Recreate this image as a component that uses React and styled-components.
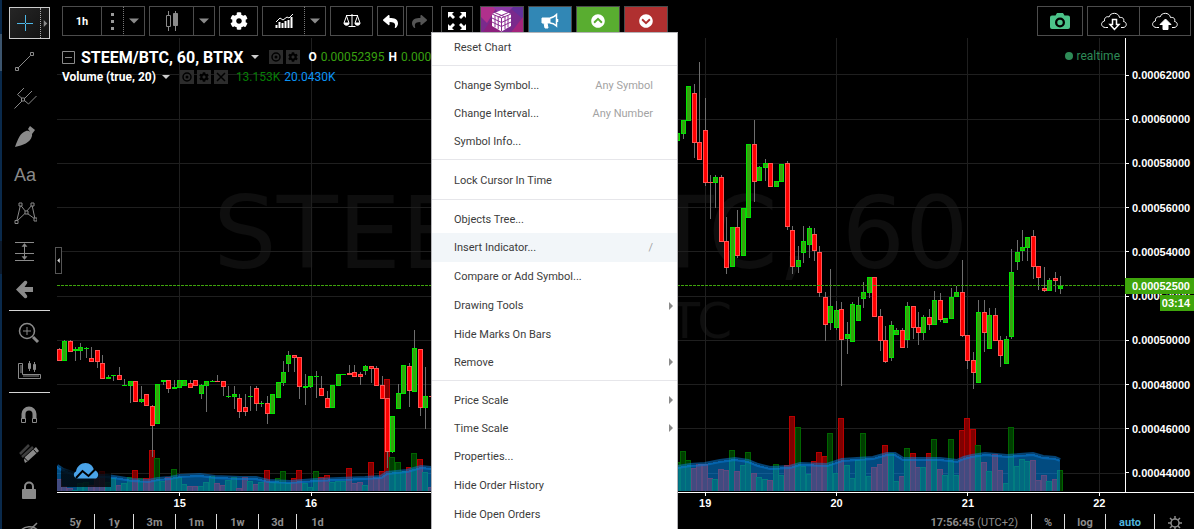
import React from "react";
import styled, { createGlobalStyle, css } from "styled-components";
import { FaCog, FaChevronCircleUp, FaChevronCircleDown, FaReply, FaShare } from "react-icons/fa";

const Global = createGlobalStyle`
  * { box-sizing: border-box; }
  body { margin: 0; background: #000; font-family: Roboto, "Open Sans", sans-serif; }
  button { font: inherit; color: inherit; background: none; border: 0; padding: 0; cursor: pointer; }
`;

/* ---------- market data: high, top, bottom, low, volume top, direction ---------- */
const WEEK_START = [
  [348, 349, 361, 361, 479, "r"], [340, 341, 361, 361, 486, "r", "g"], [340, 341, 352, 352, 488, "r"],
  [347, 349, 351, 361, 490, "g"], [343, 347, 351, 360, 483, "g"], [347, 348, 349, 358, 482, "g"],
  [347, 358, 362, 362, 485, "r"], [350, 350, 362, 368, 478, "r"], [355, 363, 379, 379, 471, "r"],
  [375, 377, 379, 379, 482, "g"], [375, 375, 376, 381, 478, "g"], [367, 375, 380, 380, 485, "r"],
  [379, 385, 386, 386, 483, "g"], [381, 381, 386, 403, 477, "g"], [381, 381, 402, 402, 470, "r"],
  [386, 399, 402, 403, 478, "g"], [394, 394, 406, 406, 478, "r"], [405, 406, 426, 457, 450, "r"],
  [384, 384, 424, 424, 458, "g"], [380, 380, 382, 385, 481, "g"], [380, 380, 389, 393, 477, "r"],
  [380, 387, 389, 389, 469, "g"], [380, 380, 388, 388, 477, "g"], [380, 380, 386, 386, 484, "g"],
  [380, 383, 388, 388, 486, "r"], [380, 380, 386, 386, 486, "r"], [384, 385, 394, 399, 486, "g"],
  [381, 381, 386, 412, 482, "g"], [380, 381, 382, 382, 476, "g"], [375, 381, 382, 382, 483, "r"],
  [381, 381, 387, 396, 485, "r"], [386, 396, 397, 398, 480, "g"], [386, 394, 397, 409, 477, "g"],
  [394, 398, 412, 418, 488, "r"], [394, 407, 412, 416, 477, "r"], [386, 396, 397, 411, 481, "g"],
  [386, 388, 404, 411, 484, "r"], [401, 403, 404, 407, 482, "g"], [396, 403, 414, 424, 470, "r"],
  [394, 394, 414, 414, 482, "g"], [382, 382, 398, 398, 478, "g"], [361, 372, 383, 386, 471, "g"],
  [351, 355, 364, 372, 483, "g"], [355, 355, 358, 372, 478, "r"], [357, 357, 387, 399, 470, "r"],
  [374, 386, 388, 405, 483, "g"], [376, 376, 387, 388, 487, "g"], [371, 376, 377, 398, 471, "g"],
  [376, 388, 396, 396, 477, "r"], [391, 398, 408, 408, 475, "r"], [385, 385, 408, 408, 482, "g"],
  [374, 374, 386, 386, 481, "g"], [374, 374, 375, 375, 481, "g"], [365, 373, 375, 375, 468, "r"],
  [365, 372, 377, 377, 483, "r"], [372, 374, 377, 385, 482, "r"], [365, 366, 371, 375, 485, "g"],
  [366, 366, 369, 383, 462, "r"], [366, 368, 386, 386, 478, "r"], [376, 385, 399, 399, 471, "r"],
  [398, 398, 452, 468, 379, "r"], [416, 416, 452, 453, 457, "g"], [384, 393, 409, 409, 462, "g"],
  [365, 365, 394, 394, 471, "g"], [363, 366, 391, 407, 467, "r"], [330, 348, 392, 392, 453, "g"],
  [349, 349, 408, 416, 459, "r"], [367, 396, 408, 429, 472, "g"], [396, 396, 397, 397, 487, "r"],
];
const WEEK_END = [
  [133, 133, 141, 141, 462, "g"], [120, 120, 134, 139, 451, "g"], [86, 86, 121, 121, 460, "g"],
  [84, 93, 143, 158, 468, "r"], [62, 142, 160, 160, 464, "r"], [98, 130, 183, 186, 464, "r"],
  [175, 182, 183, 219, 478, "r"], [175, 177, 183, 208, 479, "g"], [175, 177, 242, 242, 469, "r"],
  [217, 241, 268, 274, 470, "r"], [227, 227, 267, 267, 450, "g"], [210, 227, 256, 258, 471, "r"],
  [208, 208, 256, 256, 465, "g"], [144, 144, 218, 218, 452, "g"], [120, 144, 182, 202, 473, "r"],
  [166, 167, 181, 181, 477, "g"], [159, 163, 168, 181, 479, "g"], [163, 163, 187, 187, 480, "r"],
  [181, 181, 187, 187, 464, "g"], [164, 164, 182, 182, 475, "g"], [161, 163, 227, 230, 465, "r"],
  [226, 230, 267, 274, 416, "r"], [246, 260, 267, 273, 427, "g"], [226, 241, 253, 263, 466, "g"],
  [226, 228, 245, 258, 474, "g"], [228, 234, 251, 261, 461, "r"], [246, 252, 293, 297, 452, "r"],
  [292, 297, 325, 341, 456, "r"], [269, 306, 323, 330, 433, "g"], [301, 310, 328, 330, 473, "g"],
  [302, 309, 340, 386, 418, "r"], [322, 334, 339, 354, 465, "g"], [302, 304, 342, 342, 478, "g"],
  [297, 305, 321, 321, 460, "g"], [282, 292, 299, 308, 433, "g"], [277, 277, 293, 298, 476, "g"],
  [277, 277, 317, 317, 467, "r"], [309, 316, 341, 351, 464, "r"], [326, 340, 362, 363, 445, "r"],
  [321, 325, 358, 361, 453, "g"], [328, 330, 335, 335, 481, "g"], [328, 330, 348, 348, 476, "r"],
  [302, 306, 340, 348, 448, "g"], [306, 306, 328, 339, 453, "r"], [312, 327, 333, 345, 467, "r"],
  [315, 317, 333, 340, 467, "g"], [309, 317, 325, 330, 453, "r"], [291, 300, 325, 325, 439, "g"],
  [293, 300, 320, 322, 469, "r"], [318, 318, 323, 323, 475, "g"], [288, 297, 319, 319, 439, "g"],
  [286, 292, 297, 297, 475, "g"], [260, 292, 336, 337, 430, "r"], [335, 335, 361, 369, 418, "r"],
  [352, 360, 373, 389, 429, "r"], [300, 312, 383, 383, 445, "g"], [300, 312, 333, 352, 462, "r"],
  [308, 315, 349, 349, 471, "g"], [308, 315, 341, 341, 454, "r"], [336, 340, 356, 367, 470, "r"],
  [336, 339, 364, 364, 483, "g"], [249, 272, 337, 339, 427, "g"], [240, 252, 262, 270, 466, "g"],
  [230, 247, 251, 261, 459, "g"], [237, 237, 248, 261, 461, "g"], [230, 236, 267, 279, 460, "r"],
  [266, 266, 278, 290, 480, "r"], [267, 288, 291, 292, 475, "r"], [278, 280, 291, 291, 481, "g"],
  [272, 278, 281, 292, 479, "r"], [276, 286, 289, 294, 470, "g"],
];
const hourX = (hour) => Math.round(179 + hour * 5.474);
const toBar = (first) => ([high, top, bottom, low, vol, volDir, dir], i) => ({
  x: hourX(first + i), high, top, bottom, low, vol, volDir, dir: dir || volDir,
});
const BARS = [...WEEK_START.map(toBar(-22)), ...WEEK_END.map(toBar(91))];

const AVERAGE =
  "57,466 63,470 75,474 90,476 107,476 120,478 132,480 148,481 158,479 170,478 180,476 200,475 215,477 240,478 " +
  "256,478 268,481 290,482 316,480 340,479 365,478 381,477 387,473 407,471 421,467 431,468 500,474 600,472 " +
  "678,467 690,465 705,464 720,461 735,459 748,461 758,465 770,468 790,467 800,464 827,465 833,463 842,460 " +
  "857,459 873,458 887,454 895,454 903,459 940,459 957,461 964,458 972,456 985,454 1007,456 1033,454 1043,457 " +
  "1055,458 1060,460";

const PRICES = ["0.00062000", "0.00060000", "0.00058000", "0.00056000", "0.00054000",
  "0.00052000", "0.00050000", "0.00048000", "0.00046000", "0.00044000"];
const GRID_Y = [74, 119, 163, 207, 251, 296, 340, 384, 428, 473];
const GRID_X = [179, 311, 442, 574, 705, 836, 967, 1099];
const DAYS = ["15", "16", "17", "18", "19", "20", "21", "22"];
const TONE = {
  r: { edge: "#ff5454", body: "#ff0000", volEdge: "#b80000", vol: "#800000" },
  g: { edge: "#00e600", body: "#38a010", volEdge: "#006400", vol: "#003e00" },
};

/* ---------- page frame ---------- */
const Page = styled.div`
  position: relative;
  display: flex;
  height: 100vh;
  overflow: hidden;
  background: #000;
  color: #fff;
`;
const DesktopEdge = styled.div`
  flex: 0 0 2px;
  background: linear-gradient(#0a2a4c 34px, #3c556e 34px 71px, #0a2a4c 71px 241px, #0c1a2c 241px 274px, #0a2a4c 274px);
`;
const Main = styled.main`
  flex: 1;
  min-width: 0;
  display: flex;
  flex-direction: column;
`;

/* ---------- drawing tools ---------- */
const Sidebar = styled.nav`
  flex: 0 0 55px;
  padding: 4px 7px 0;
  overflow: hidden;
  color: #8a8a8a;
`;
const Tool = styled.button`
  display: flex;
  align-items: center;
  justify-content: center;
  width: 41px;
  height: 38px;
  padding-right: ${(p) => (p.$flyout ? 9 : 2)}px;
  font: 18px/20px "Liberation Sans", sans-serif;
`;
const ActiveTool = styled.button`
  display: flex;
  width: 41px;
  height: 32px;
  margin: 3px 0;
  border: 1px solid #ccc;
  background: linear-gradient(135deg, #262626, #111);
`;
const ToolFace = styled.span`
  flex: 1;
  height: 100%;
  display: flex;
  align-items: center;
  justify-content: center;
  border-right: 1px dotted #aaa;
`;
const ToolFlyout = styled.span`
  width: 8px;
  height: 100%;
  display: flex;
  align-items: center;
  justify-content: center;
`;
const Divider = styled.hr`
  width: 41px;
  height: 1px;
  margin: 2px 0 3px;
  border: 0;
  background: #d5d5d5;
`;

/* ---------- top toolbar ---------- */
const Toolbar = styled.header`
  flex: 0 0 38px;
  display: flex;
  align-items: flex-start;
  gap: 4px;
  padding: 6px 3px 0 5px;
`;
const Group = styled.div`
  display: flex;
  gap: ${(p) => p.$gap || 0}px;
  margin-left: ${(p) => (p.$apart ? 4 : 0)}px;
  margin-right: ${(p) => (p.$apart ? 3 : 0)}px;
`;
const Spacer = styled.div`
  flex: 1;
`;
const ToolButton = styled.button`
  display: flex;
  align-items: center;
  justify-content: center;
  width: ${(p) => p.$w}px;
  height: 30px;
  border: 1px solid #4c4c4c;
  background: ${(p) => p.$bg || "#000"};
  color: #fff;
  font-weight: 700;
  font-size: 11px;
  ${(p) => p.$joined && css`margin-left: -1px;`}
  ${(p) => p.$dotted && css`border-left: 1px dotted #777; margin-left: -1px;`}
  ${(p) => p.$open && css`border-right: 0;`}
`;

/* ---------- chart ---------- */
const ChartRow = styled.section`
  flex: 1;
  min-height: 0;
  display: flex;
  border-bottom: 1px solid #fff;
`;
const Plot = styled.div`
  position: relative;
  flex: 1;
  min-width: 0;
`;
const Canvas = styled.svg`
  position: absolute;
  inset: 0;
  width: 100%;
  height: 100%;
`;
const Watermark = styled.div`
  position: absolute;
  inset: 0;
  display: flex;
  flex-direction: column;
  align-items: center;
  justify-content: center;
  gap: 12px;
  font-family: "DejaVu Sans", sans-serif;
  color: #0e0e0e;
  white-space: nowrap;
`;
const WatermarkLine = styled.span`
  font-size: ${(p) => p.$size}px;
  line-height: ${(p) => p.$size}px;
`;
const Legend = styled.div`
  position: relative;
  padding: 9px 0 0 5px;
`;
const LegendRow = styled.div`
  display: flex;
  align-items: center;
  height: 20px;
  font-size: 12px;
  white-space: nowrap;
`;
const Title = styled.h1`
  margin: 0 8px 0 6px;
  font-size: 16px;
  font-weight: 700;
`;
const Study = styled.strong`
  margin-right: 6px;
`;
const MiniButtons = styled.span`
  display: flex;
  gap: 3px;
  margin: 0 8px 0 10px;
`;
const MiniButton = styled.button`
  display: flex;
  align-items: center;
  justify-content: center;
  width: 14px;
  height: 14px;
  background: #2c2c2c;
  color: #000;
`;
const Value = styled.span`
  margin: 0 4px 0 0;
  color: ${(p) => p.$color};
`;
const Key = styled.strong`
  margin-right: 4px;
`;
const Realtime = styled.div`
  position: absolute;
  top: 10px;
  right: 5px;
  display: flex;
  align-items: center;
  gap: 4px;
  color: #2e8b57;
  font-size: 12px;
  line-height: 16px;
  &::before { content: ""; width: 8px; height: 8px; border-radius: 50%; background: currentColor; }
`;
const Collapse = styled.button`
  position: absolute;
  left: -2px;
  top: 209px;
  width: 7px;
  height: 27px;
  display: flex;
  align-items: center;
  justify-content: center;
  border: 1px solid #555;
  background: #000;
`;
const Brand = styled.a`
  position: absolute;
  left: 4px;
  bottom: 5px;
  width: 50px;
  height: 24px;
  padding-left: 12px;
  background: linear-gradient(transparent 2px, rgba(0, 0, 0, 0.78) 8px);
`;
const PriceAxis = styled.div`
  position: relative;
  flex: 0 0 69px;
  display: flex;
  flex-direction: column;
  justify-content: space-between;
  padding: 30px 0 12px;
  border-left: 1px solid #fff;
  font: bold 11px/14px "Liberation Sans", sans-serif;
`;
const Price = styled.span`
  display: flex;
  align-items: center;
  gap: 3px;
  &::before { content: ""; width: 3px; height: 1px; background: #fff; }
`;
const PriceTag = styled.span`
  position: absolute;
  right: 0;
  top: ${(p) => p.$top}px;
  width: ${(p) => p.$w}px;
  height: 16px;
  padding-right: 4px;
  text-align: right;
  line-height: 17px;
  background: #3fa50c;
`;
const TimeAxis = styled.div`
  flex: 0 0 21px;
  display: grid;
  grid-template-columns: repeat(8, 1fr);
  padding: 0 29px 0 57px;
  font: bold 11px/15px "Liberation Sans", sans-serif;
`;
const Day = styled.span`
  display: flex;
  flex-direction: column;
  align-items: center;
  &::before { content: ""; width: 1px; height: 3px; background: #fff; }
`;

/* ---------- bottom bar ---------- */
const Footer = styled.footer`
  flex: 0 0 15px;
  display: flex;
  overflow: hidden;
  color: #8c8c8c;
  font-size: 11px;
  font-weight: 700;
`;
const FootButton = styled.button`
  display: flex;
  align-items: center;
  justify-content: center;
  width: ${(p) => p.$w}px;
  height: 17px;
  border-left: ${(p) => (p.$first ? "0" : "1px solid #ddd")};
  color: ${(p) => (p.$on ? "#4fb4dc" : "inherit")};
`;
const Clock = styled.span`
  padding-right: 13px;
  line-height: 17px;
  small { font-size: 11px; font-weight: 400; }
`;

/* ---------- context menu ---------- */
const Menu = styled.div`
  position: absolute;
  left: 431px;
  top: 32px;
  width: 247px;
  border: 1px solid #b4b4b8;
  background: #fff;
  color: #3c3c3c;
  font-size: 11px;
`;
const MenuSection = styled.div`
  padding: ${(p) => p.$pad};
  & + & { border-top: 1px solid #e6e6ea; }
`;
const MenuItem = styled.button`
  display: flex;
  align-items: center;
  width: 100%;
  height: ${(p) => (p.$tall ? 29 : 28)}px;
  padding: 0 2px 0 22px;
  background: ${(p) => (p.$hover ? "#f2f6f9" : "transparent")};
  text-align: left;
`;
const MenuText = styled.span`
  flex: 1;
`;
const Shortcut = styled.span`
  padding-right: 22px;
  color: #a3a3a3;
`;

const Caret = ({ dir = "down", size = 8, color = "#8a8a8a" }) => {
  const d = { down: "M0 2h8L4 6z", right: "M2 0v8l4-4z", left: "M6 0v8L2 4z" }[dir];
  return <svg width={size} height={size} viewBox="0 0 8 8" aria-hidden="true"><path d={d} fill={color} /></svg>;
};
const Icon = ({ w = 24, h = 24, children, ...rest }) => (
  <svg width={w} height={h} viewBox={`0 0 ${w} ${h}`} fill="none" stroke="currentColor" aria-hidden="true" {...rest}>
    {children}
  </svg>
);

const TrendLine = () => <Icon><path d="M4.5 19.5 17.5 6.5" /><path d="M2.5 18.5h3v3h-3zM17.5 3.5h3v3h-3z" /></Icon>;
const Pitchfork = () => (
  <Icon><path d="M1.5 21.5 9 14M4.500 7.500 11 1M4.500 7.500l11 9.500 8-8M12 11l7-7" /><path d="M8.500 11h3v3h-3z" fill="#000" /></Icon>
);
const Brush = () => (
  <Icon stroke="none" fill="currentColor"><path d="M2 22C5 14 7 8 13 6c3-1 7 2 6 5-2 7-9 9-17 11zM15 4l2-3 5 4-3 4z" /></Icon>
);
const Pattern = () => (
  <Icon>
    <path d="M3.500 21 7.500 4 13 11l6-7 3 14-9-6.500-9.500 9" />
    <path d="M2 19.500h3v3H2zM6 2h3v3H6zM12 10h3v3h-3zM18 2h3v3h-3zM21 17h3v3h-3z" fill="#000" />
  </Icon>
);
const Forecast = () => (
  <Icon>
    <path d="M2 3.500h19M2 14.500h19M2 21.500h19M11.500 5v15" />
    <path d="M9 7.500 11.500 4.500 14 7.500zM9 17.500l2.500 3 2.500-3z" fill="currentColor" strokeWidth=".5" />
  </Icon>
);
const BackArrow = () => (
  <Icon stroke="none" fill="currentColor"><path d="M3 12.500 11.500 4c2-1 3.500 1 2.500 2.500L11.500 10H20v5h-8.500l2.500 3.500c1 2-1 3.500-2.500 2.500z" /></Icon>
);
const Zoom = () => (
  <Icon><circle cx="10" cy="10" r="7.500" strokeWidth="1.500" /><path d="M10 6v8M6 10h8" /><path d="m16 16 5 5" strokeWidth="3" /></Icon>
);
const Measure = () => (
  <Icon>
    <path d="M1.500 4.500h4v11h18v4h-22z" />
    <path d="M3 7h2M3 9h2M3 11h2M3 13h2M7 18v-2M9 18v-2M11 18v-2M13 18v-2M15 18v-2M17 18v-2M19 18v-2M21 18v-2M12.500 2v10M17.500 3v10" />
    <path d="M11.500 4.500h2v5h-2zM16.500 5.500h2v5h-2z" fill="currentColor" />
  </Icon>
);
const Magnet = () => (
  <Icon>
    <path d="M6.500 16v-5a5.500 5.500 0 0 1 11 0v5" strokeWidth="4" />
    <path d="M4.500 15.500h4v4h-4zM15.500 15.500h4v4h-4z" fill="#000" />
  </Icon>
);
const Pencils = () => (
  <Icon>
    <path d="m8 22-1-3 1-3L19 6l3 4-11 10z" fill="currentColor" stroke="none" />
    <path d="m16.500 8.500 3.500 4M7.500 17l3 3" stroke="#000" />
    <path d="M5 16 16 6M3 13 12 4" strokeWidth="2.500" opacity=".45" />
  </Icon>
);
const Lock = () => (
  <Icon><path d="M5.500 10.500h13v9h-13z" fill="currentColor" /><path d="M8 10V7.500a4 4 0 0 1 8 0V10" strokeWidth="2" /></Icon>
);
const HiddenEye = () => (
  <Icon><path d="M3 15c3-6 14-8 19 0M5 21 20 6M9 15a4 4 0 0 1 6-2" strokeWidth="1.500" /></Icon>
);
const Cross = () => <Icon w={18} h={18} stroke="#4db8e8"><path d="M9.500 1v16M1 9.500h16" /><path d="M9.500 9v1" stroke="#1a1a1a" /></Icon>;
const CandleIcon = () => (
  <Icon w={16} h={20} stroke="#8a8a8a"><path d="M4.500 0v4M4.500 16v4M11.500 0v20" /><path d="M2.500 4.500h4v11h-4z" /><path d="M9.500 2.500h4v12h-4z" fill="#8a8a8a" /></Icon>
);
const Dots = () => <Icon w={4} h={18} stroke="none" fill="#999"><path d="M0 1h3v3H0zM0 8h3v3H0zM0 15h3v3H0z" /></Icon>;
const IndicatorIcon = () => (
  <Icon w={18} h={16}>
    <path d="M1.500 15v-3M4.500 15V9M7.500 15v-5M10.500 15V8M13.500 15V7M16.500 15V4" strokeWidth="2" />
    <path d="m1 9 4-4 3 2 4-3 2 1 4-4" />
  </Icon>
);
const Scales = () => (
  <Icon w={18} h={16}>
    <path d="M9 1v12M3 2.500h12M5.500 13.500h7M3.500 3 1 10M3.500 3 6 10M14.500 3 12 10M14.500 3 17 10" />
    <path d="M1 10h5c0 3-5 3-5 0zM12 10h5c0 3-5 3-5 0z" fill="currentColor" />
  </Icon>
);
const Expand = () => (
  <Icon w={18} h={18} stroke="none" fill="currentColor">
    <path d="M0 0h6L4 2l3 3-2 2-3-3-2 2zM18 0h-6l2 2-3 3 2 2 3-3 2 2zM0 18h6l-2-2 3-3-2-2-3 3-2-2zM18 18h-6l2-2-3-3 2-2 3 3 2-2z" />
  </Icon>
);
const CubeButtonArt = () => (
  <svg width="42" height="28" viewBox="0 0 42 28" aria-hidden="true">
    <path d="M0 0h42v28H0z" fill="#7a2a8c" />
    <path d="M0 0h16L6 16 0 10z" fill="#b0308c" /><path d="M28 0h14v12z" fill="#63309a" />
    <path d="M0 28 12 10l10 18z" fill="#8c1f7c" /><path d="M42 28V10L28 28z" fill="#a5247c" /><path d="m12 0 10 10L32 0z" fill="#8d3aa8" />
    <path d="m20.500 3 9.500 4v12l-9.500 5.500L11 19V7z" fill="#fff" />
    <path d="M11 7l9.500 4L30 7M20.500 11v13M14 8.300v12M17.200 9.700v12.500M24 9.700v12.500M27 8.300v12M11 11l9.500 4.500L30 11M11 15l9.500 4.500L30 15M14 5.700l9.500 4M27 5.700l-9.500 4" stroke="#8a2c90" fill="none" />
  </svg>
);
const Megaphone = () => (
  <Icon w={18} h={16}>
    <path d="M1 5h8v5H6l1 5H4l-1-5H1z" fill="currentColor" strokeLinejoin="round" />
    <path d="M9 5c3 0 5-2 6.500-3.500v11.500C14 11.500 12 10 9 10M16.500 6v3" strokeWidth="1.500" />
  </Icon>
);
const Camera = () => (
  <Icon w={20} h={16} stroke="none" fill="#4cc38a">
    <path fillRule="evenodd" d="M2 2.500h3.500L7 0h6l1.500 2.500H18a2 2 0 0 1 2 2V14a2 2 0 0 1-2 2H2a2 2 0 0 1-2-2V4.500a2 2 0 0 1 2-2zM10 4.500a5 5 0 1 0 0 10 5 5 0 0 0 0-10zm0 2.300a2.700 2.700 0 1 1 0 5.400 2.700 2.700 0 0 1 0-5.400z" />
  </Icon>
);
const Cloud = ({ up }) => (
  <Icon w={28} h={20}>
    <path d="M8 16.500H5.500C1 16.500 0 11 4.500 10 4 6.500 7 5 9 6 10.500 1 18.500 1 19.500 6.500 23 6 24.500 8 23.500 10.500c4 .5 3.500 6-.5 6h-2" />
    {up ? <path d="M14.500 8 20 13.500h-3v5h-5v-5H9z" fill="currentColor" />
      : <path d="M14.500 18.500 10 13.500h2.500v-5h4v5H19z" fill="#000" strokeWidth="1.500" />}
  </Icon>
);
const EyeMini = () => <Icon w={12} h={10}><circle cx="6" cy="5" r="4" strokeWidth="1.500" /><circle cx="6" cy="5" r="1.500" fill="currentColor" stroke="none" /></Icon>;
const CloseMini = () => <Icon w={10} h={10}><path d="m1 1 8 8M9 1 1 9" strokeWidth="1.500" /></Icon>;
const SunGear = () => (
  <Icon w={14} h={14}><circle cx="7" cy="7" r="4" strokeWidth="1.500" /><path d="M7 0v3M7 11v3M0 7h3M11 7h3M2 2l2 2M10 10l2 2M12 2l-2 2M4 10l-2 2" strokeWidth="1.500" /></Icon>
);

const ChartCanvas = () => (
  <Canvas viewBox="57 38 1068 454" preserveAspectRatio="none" shapeRendering="crispEdges" role="img" aria-label="STEEM/BTC hourly candles">
    {GRID_Y.map((y) => <rect key={y} x="57" y={y} width="1068" height="1" fill="#1f1f1f" />)}
    {GRID_X.map((x) => <rect key={x} x={x} y="38" width="1" height="454" fill="#1f1f1f" />)}
    {BARS.map((b) => (
      <g key={b.x}>
        <rect x={b.x - 3} y={b.vol} width="6" height={491 - b.vol} fill={TONE[b.volDir].volEdge} />
        <rect x={b.x - 2} y={b.vol + 1} width="4" height={Math.max(0, 490 - b.vol)} fill={TONE[b.volDir].vol} />
      </g>
    ))}
    <polygon points={`57,491 ${AVERAGE} 1060,491`} fill="#0496ff" opacity=".5" />
    <polyline points={AVERAGE} fill="none" stroke="#0a78d0" strokeWidth="4" opacity=".55" shapeRendering="auto" />
    {BARS.map((b) => (
      <g key={b.x}>
        <rect x={b.x} y={b.high} width="1" height={b.low - b.high} fill="#6e6e6e" />
        <rect x={b.x - 2} y={b.top} width="5" height={b.bottom - b.top} fill={TONE[b.dir].edge} />
        <rect x={b.x - 1} y={b.top + 1} width="3" height={Math.max(0, b.bottom - b.top - 2)} fill={TONE[b.dir].body} />
      </g>
    ))}
    <path d="M57 285.500H1125" stroke="#3fa50c" strokeDasharray="3 1" />
  </Canvas>
);

const MENU = [
  { pad: "0 0 4px", items: [["Reset Chart"]] },
  { pad: "5px 0 4px", items: [["Change Symbol...", { key: "Any Symbol" }], ["Change Interval...", { key: "Any Number" }], ["Symbol Info..."]] },
  { pad: "6px 0 5px", items: [["Lock Cursor In Time"]] },
  { pad: "5px 0 4px", items: [["Objects Tree..."], ["Insert Indicator...", { key: "/", hover: true, tall: true }],
    ["Compare or Add Symbol...", { tall: true }], ["Drawing Tools", { sub: true, tall: true }], ["Hide Marks On Bars"], ["Remove", { sub: true }]] },
  { pad: "5px 0 0", items: [["Price Scale", { sub: true }], ["Time Scale", { sub: true }], ["Properties...", { tall: true }],
    ["Hide Order History", { tall: true }], ["Hide Open Orders", { tall: true }]] },
];

const FLYOUT_TOOLS = [["Trend line", <TrendLine />], ["Pitchfork", <Pitchfork />], ["Brush", <Brush />], ["Text", "Aa"],
  ["Pattern", <Pattern />], ["Forecast", <Forecast />], ["Back", <BackArrow />]];
const RANGES = [["5y", 37], ["1y", 39], ["3m", 42], ["1m", 41], ["1w", 42], ["3d", 38], ["1d", 42]];

export default function App() {
  return (
    <Page>
      <Global />
      <DesktopEdge />
      <Sidebar aria-label="Drawing tools">
        <ActiveTool aria-label="Cross">
          <ToolFace><Cross /></ToolFace>
          <ToolFlyout><Caret dir="right" size={7} /></ToolFlyout>
        </ActiveTool>
        {FLYOUT_TOOLS.map(([name, art]) => <Tool key={name} $flyout aria-label={name}>{art}</Tool>)}
        <Divider />
        <Tool aria-label="Zoom in"><Zoom /></Tool>
        <Tool aria-label="Measure"><Measure /></Tool>
        <Divider />
        <Tool aria-label="Magnet"><Magnet /></Tool>
        <Tool aria-label="Stay in drawing mode"><Pencils /></Tool>
        <Tool aria-label="Lock drawings"><Lock /></Tool>
        <Tool aria-label="Hide drawings"><HiddenEye /></Tool>
      </Sidebar>

      <Main>
        <Toolbar>
          <Group>
            <ToolButton $w={40}>1h</ToolButton>
            <ToolButton $w={23} $joined $open aria-label="More"><Dots /></ToolButton>
            <ToolButton $w={22} $dotted aria-label="Intervals"><Caret size={10} /></ToolButton>
          </Group>
          <Group>
            <ToolButton $w={45} aria-label="Candles"><CandleIcon /></ToolButton>
            <ToolButton $w={22} $joined aria-label="Chart types"><Caret size={10} /></ToolButton>
          </Group>
          <ToolButton $w={39} aria-label="Settings"><FaCog size={18} /></ToolButton>
          <Group>
            <ToolButton $w={43} $open aria-label="Indicators"><IndicatorIcon /></ToolButton>
            <ToolButton $w={22} $dotted aria-label="Indicator list"><Caret size={10} /></ToolButton>
          </Group>
          <ToolButton $w={43} aria-label="Compare"><Scales /></ToolButton>
          <Group $gap={2}>
            <ToolButton $w={27} aria-label="Undo"><FaReply size={15} /></ToolButton>
            <ToolButton $w={27} aria-label="Redo"><FaShare size={15} color="#555" /></ToolButton>
          </Group>
          <Group $apart><ToolButton $w={32} aria-label="Fullscreen"><Expand /></ToolButton></Group>
          <ToolButton $w={44} aria-label="Cube"><CubeButtonArt /></ToolButton>
          <ToolButton $w={44} $bg="#3187b5" aria-label="Announce"><Megaphone /></ToolButton>
          <ToolButton $w={44} $bg="#59ad30" aria-label="Buy"><FaChevronCircleUp size={14} /></ToolButton>
          <ToolButton $w={44} $bg="#b03030" aria-label="Sell"><FaChevronCircleDown size={14} /></ToolButton>
          <Spacer />
          <ToolButton $w={46} aria-label="Snapshot"><Camera /></ToolButton>
          <Group>
            <ToolButton $w={53} aria-label="Load"><Cloud /></ToolButton>
            <ToolButton $w={52} $joined aria-label="Save"><Cloud up /></ToolButton>
          </Group>
        </Toolbar>

        <ChartRow>
          <Plot>
            <Watermark aria-hidden="true">
              <WatermarkLine $size={100}>STEEM/BTC, 60</WatermarkLine>
              <WatermarkLine $size={50}>STEEM/BTC</WatermarkLine>
            </Watermark>
            <ChartCanvas />
            <Legend>
              <LegendRow>
                <Icon w={13} h={13} stroke="#8a8a8a"><path d="M.5.5h12v12H.5zM3 6.500h7" /></Icon>
                <Title>STEEM/BTC, 60, BTRX</Title>
                <Caret color="#ccc" />
                <MiniButtons>
                  <MiniButton aria-label="Hide symbol"><EyeMini /></MiniButton>
                  <MiniButton aria-label="Format symbol"><FaCog size={10} /></MiniButton>
                </MiniButtons>
                <Key>O</Key><Value $color="#38a010">0.00052395</Value>
                <Key>H</Key><Value $color="#38a010">0.000</Value>
              </LegendRow>
              <LegendRow>
                <Study>Volume (true, 20)</Study>
                <Caret color="#ccc" />
                <MiniButtons>
                  <MiniButton aria-label="Hide volume"><EyeMini /></MiniButton>
                  <MiniButton aria-label="Format volume"><FaCog size={10} /></MiniButton>
                  <MiniButton aria-label="Delete volume"><CloseMini /></MiniButton>
                </MiniButtons>
                <Value $color="#067d06">13.153K</Value>
                <Value $color="#0a93f5">20.0430K</Value>
              </LegendRow>
            </Legend>
            <Realtime>realtime</Realtime>
            <Collapse aria-label="Collapse toolbar"><Caret dir="left" size={5} color="#ddd" /></Collapse>
            <Brand href="#" aria-label="TradingView">
              <svg width="26" height="16" viewBox="0 0 26 16" aria-hidden="true">
                <path d="M4 15.500C0 15 0 9.500 3 8.500 4 3 8 0 12.500 0S20 3 21 7c4 .5 6 6 2 8.500z" fill="#4aa3e8" />
                <path d="m3 15 6.500-7 6 5L22 6.500" stroke="#000" strokeWidth="2" fill="none" />
              </svg>
            </Brand>
          </Plot>
          <PriceAxis>
            {PRICES.map((p) => <Price key={p}>{p}</Price>)}
            <PriceTag $top={240} $w={69}>0.00052500</PriceTag>
            <PriceTag $top={257} $w={34}>03:14</PriceTag>
          </PriceAxis>
        </ChartRow>
        <TimeAxis>{DAYS.map((d) => <Day key={d}>{d}</Day>)}</TimeAxis>

        <Footer>
          {RANGES.map(([label, w], i) => <FootButton key={label} $w={w} $first={i === 0}>{label}</FootButton>)}
          <Spacer />
          <Clock>17:56:45 <small>(UTC+2)</small></Clock>
          <FootButton $w={33}>%</FootButton>
          <FootButton $w={41}>log</FootButton>
          <FootButton $w={49} $on>auto</FootButton>
          <FootButton $w={40} aria-label="Chart properties"><SunGear /></FootButton>
        </Footer>
      </Main>

      <Menu role="menu">
        {MENU.map((section) => (
          <MenuSection key={section.items[0][0]} $pad={section.pad}>
            {section.items.map(([label, o = {}]) => (
              <MenuItem key={label} role="menuitem" $tall={o.tall} $hover={o.hover}>
                <MenuText>{label}</MenuText>
                {o.key && <Shortcut>{o.key}</Shortcut>}
                {o.sub && <Caret dir="right" size={8} />}
              </MenuItem>
            ))}
          </MenuSection>
        ))}
      </Menu>
    </Page>
  );
}
